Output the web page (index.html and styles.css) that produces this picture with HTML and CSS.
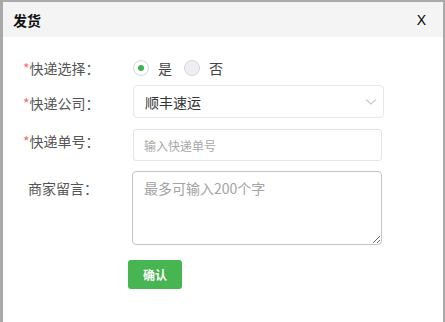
FILE: index.html
```html
<!DOCTYPE html>
<html lang="zh-CN">
<head>
    <meta charset="UTF-8">
    <title>发货</title>
    <link rel="stylesheet" href="styles.css">
</head>
<body>
    <div class="dialog">
        <div class="dialog-head">
            <span class="title">发货</span>
            <span class="close">X</span>
        </div>
        <div class="form">
            <div class="row row-radio">
                <label class="label"><i>*</i>快递选择：</label>
                <span class="radio checked"></span><span class="radio-text">是</span>
                <span class="radio"></span><span class="radio-text">否</span>
            </div>
            <div class="row row-select">
                <label class="label"><i>*</i>快递公司：</label>
                <div class="select">
                    <span>顺丰速运</span>
                    <svg width="12" height="8" viewBox="0 0 12 8"><path d="M1 1.5 L6 6 L11 1.5" fill="none" stroke="#c7cbd2" stroke-width="1.3"/></svg>
                </div>
            </div>
            <div class="row row-input">
                <label class="label"><i>*</i>快递单号：</label>
                <input type="text" class="input" placeholder="输入快递单号">
            </div>
            <div class="row row-text">
                <label class="label plain">商家留言：</label>
                <textarea class="textarea" placeholder="最多可输入200个字"></textarea>
            </div>
            <button class="btn">确认</button>
        </div>
    </div>
</body>
</html>
```

FILE: styles.css
```css
body { margin: 0; background: #a9a9a9; font-family: "Noto Sans CJK SC", "Liberation Sans", sans-serif; overflow: hidden; }
.dialog { margin: 2px 2px 0 3px; height: 320px; background: #fff; }
.dialog-head { height: 35px; background: #f4f4f4; display: flex; align-items: center; justify-content: space-between; padding: 0 17px 0 10px; }
.title { font-size: 14px; font-weight: bold; color: #111; }
.close { font-family: "Liberation Sans", sans-serif; font-size: 14px; color: #000; }
.form { padding: 21px 0 0 20px; }
.row { display: flex; }
.label { width: 110px; flex: none; font-size: 14px; line-height: 20px; color: #555; }
.label i { font-style: normal; color: #f56c6c; }
.label.plain { padding-left: 5px; width: 105px; }
.row-radio { height: 20px; align-items: center; margin-bottom: 7px; }
.radio { width: 14px; height: 14px; border: 1px solid #d3d8df; border-radius: 50%; background: #eeeff1; display: flex; align-items: center; justify-content: center; }
.radio.checked { background: #fff; }
.radio.checked::after { content: ""; width: 6px; height: 6px; border-radius: 50%; background: #3fb34f; }
.radio-text { font-size: 14px; color: #444; margin: 0 12px 0 9px; }
.row-select { margin-bottom: 11px; }
.row-select .label { padding-top: 8px; }
.select { height: 31px; border: 1px solid #e4e7ed; border-radius: 4px; display: flex; align-items: center; justify-content: space-between; padding: 0 6px 0 11px; width: 232px; font-size: 14px; color: #333; }
.row-input { margin-bottom: 10px; }
.row-input .label { padding-top: 2px; }
.input { width: 249px; height: 32px; box-sizing: border-box; border: 1px solid #e1e4ea; border-radius: 3px; padding: 0 10px; font-family: inherit; font-size: 12px; margin: 0; }
.input::placeholder { color: #a8a8a8; }
.row-text .label { padding-top: 7px; }
.textarea { width: 250px; height: 74px; box-sizing: border-box; border: 1px solid #c4c4c4; border-radius: 4px; padding: 6px 11px; font-family: inherit; font-size: 14px; margin: 0 0 0 -1px; }
.textarea::placeholder { color: #a3a3a3; }
.btn { margin: 15px 0 0 105px; width: 54px; height: 29px; border: none; border-radius: 3px; background: #46b552; color: #fff; font-family: inherit; font-size: 12px; font-weight: bold; padding: 0; }
```
